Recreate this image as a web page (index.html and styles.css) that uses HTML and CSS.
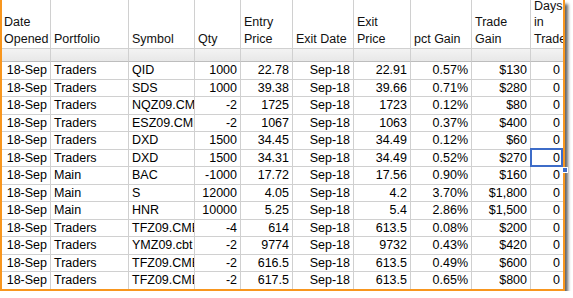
FILE: index.html
```html
<!DOCTYPE html>
<html>
<head>
<meta charset="utf-8">
<link rel="stylesheet" href="styles.css">
</head>
<body>
<div class="frame">
  <div class="sheet">
    <div class="c h first">Date<br>Opened</div>
    <div class="c h">Portfolio</div>
    <div class="c h">Symbol</div>
    <div class="c h">Qty</div>
    <div class="c h">Entry<br>Price</div>
    <div class="c h">Exit Date</div>
    <div class="c h">Exit<br>Price</div>
    <div class="c h">pct Gain</div>
    <div class="c h">Trade<br>Gain</div>
    <div class="c h last">Days<br>in<br>Trade</div>

    <div class="c band"></div><div class="c band"></div><div class="c band"></div><div class="c band"></div><div class="c band"></div>
    <div class="c band"></div><div class="c band"></div><div class="c band"></div><div class="c band"></div><div class="c band last"></div>

    <div class="c r">18-Sep</div><div class="c">Traders</div><div class="c">QID</div><div class="c r">1000</div><div class="c r">22.78</div><div class="c r">Sep-18</div><div class="c r">22.91</div><div class="c r">0.57%</div><div class="c r">$130</div><div class="c r last">0</div>
    <div class="c r">18-Sep</div><div class="c">Traders</div><div class="c">SDS</div><div class="c r">1000</div><div class="c r">39.38</div><div class="c r">Sep-18</div><div class="c r">39.66</div><div class="c r">0.71%</div><div class="c r">$280</div><div class="c r last">0</div>
    <div class="c r">18-Sep</div><div class="c">Traders</div><div class="c">NQZ09.CME</div><div class="c r">-2</div><div class="c r">1725</div><div class="c r">Sep-18</div><div class="c r">1723</div><div class="c r">0.12%</div><div class="c r">$80</div><div class="c r last">0</div>
    <div class="c r">18-Sep</div><div class="c">Traders</div><div class="c">ESZ09.CME</div><div class="c r">-2</div><div class="c r">1067</div><div class="c r">Sep-18</div><div class="c r">1063</div><div class="c r">0.37%</div><div class="c r">$400</div><div class="c r last">0</div>
    <div class="c r">18-Sep</div><div class="c">Traders</div><div class="c">DXD</div><div class="c r">1500</div><div class="c r">34.45</div><div class="c r">Sep-18</div><div class="c r">34.49</div><div class="c r">0.12%</div><div class="c r">$60</div><div class="c r last">0</div>
    <div class="c r">18-Sep</div><div class="c">Traders</div><div class="c">DXD</div><div class="c r">1500</div><div class="c r">34.31</div><div class="c r">Sep-18</div><div class="c r">34.49</div><div class="c r">0.52%</div><div class="c r">$270</div><div class="c r last sel">0</div>
    <div class="c r">18-Sep</div><div class="c">Main</div><div class="c">BAC</div><div class="c r">-1000</div><div class="c r">17.72</div><div class="c r">Sep-18</div><div class="c r">17.56</div><div class="c r">0.90%</div><div class="c r">$160</div><div class="c r last">0</div>
    <div class="c r">18-Sep</div><div class="c">Main</div><div class="c">S</div><div class="c r">12000</div><div class="c r">4.05</div><div class="c r">Sep-18</div><div class="c r">4.2</div><div class="c r">3.70%</div><div class="c r">$1,800</div><div class="c r last">0</div>
    <div class="c r">18-Sep</div><div class="c">Main</div><div class="c">HNR</div><div class="c r">10000</div><div class="c r">5.25</div><div class="c r">Sep-18</div><div class="c r">5.4</div><div class="c r">2.86%</div><div class="c r">$1,500</div><div class="c r last">0</div>
    <div class="c r">18-Sep</div><div class="c">Traders</div><div class="c">TFZ09.CME</div><div class="c r">-4</div><div class="c r">614</div><div class="c r">Sep-18</div><div class="c r">613.5</div><div class="c r">0.08%</div><div class="c r">$200</div><div class="c r last">0</div>
    <div class="c r">18-Sep</div><div class="c">Traders</div><div class="c">YMZ09.cbt</div><div class="c r">-2</div><div class="c r">9774</div><div class="c r">Sep-18</div><div class="c r">9732</div><div class="c r">0.43%</div><div class="c r">$420</div><div class="c r last">0</div>
    <div class="c r">18-Sep</div><div class="c">Traders</div><div class="c">TFZ09.CME</div><div class="c r">-2</div><div class="c r">616.5</div><div class="c r">Sep-18</div><div class="c r">613.5</div><div class="c r">0.49%</div><div class="c r">$600</div><div class="c r last">0</div>
    <div class="c r">18-Sep</div><div class="c">Traders</div><div class="c">TFZ09.CME</div><div class="c r">-2</div><div class="c r">617.5</div><div class="c r">Sep-18</div><div class="c r">613.5</div><div class="c r">0.65%</div><div class="c r">$800</div><div class="c r last">0</div>
  </div>
  <div class="handle"></div>
</div>
</body>
</html>
```
FILE: styles.css
```css
html, body {
  margin: 0;
  background: #fff;
}
body {
  font-family: "Liberation Sans", Arial, sans-serif;
  font-size: 12.5px;
  color: #000;
}
.frame {
  position: relative;
  width: 561px;
  height: 289px;
  border: 2px solid #f8961e;
  border-top: 0;
  box-shadow: 3px 4px 3px rgba(0, 0, 0, 0.6);
}
.sheet {
  display: grid;
  grid-template-columns: 49px 78px 66px 46px 52px 61px 57px 61px 59px 32px;
  grid-template-rows: 49px 13px repeat(13, 17.5px);
  height: 100%;
  overflow: hidden;
}
.c {
  box-sizing: border-box;
  border-right: 1px solid #d0d0d0;
  border-bottom: 1px solid #d0d0d0;
  padding: 0 3px;
  line-height: 16.5px;
  white-space: nowrap;
  overflow: hidden;
}
.c.last {
  border-right: 0;
  overflow: visible;
}
.r {
  text-align: right;
}
.h {
  display: flex;
  flex-direction: column;
  justify-content: flex-end;
  padding-bottom: 1px;
  color: #111;
}
.h.first {
  padding-left: 2px;
}
.band {
  background: linear-gradient(#f3f3f3, #e8e8e8);
  border-bottom-color: #bdbdbd;
}
.sel {
  position: relative;
}
.sel::after {
  content: "";
  position: absolute;
  left: -1px;
  top: -2px;
  right: 0;
  bottom: -1px;
  border: 2px solid #3d6cc8;
}
.handle {
  position: absolute;
  left: 560px;
  top: 167px;
  width: 4px;
  height: 4px;
  background: #3d6cc8;
  border: 1px solid #fff;
}
```
